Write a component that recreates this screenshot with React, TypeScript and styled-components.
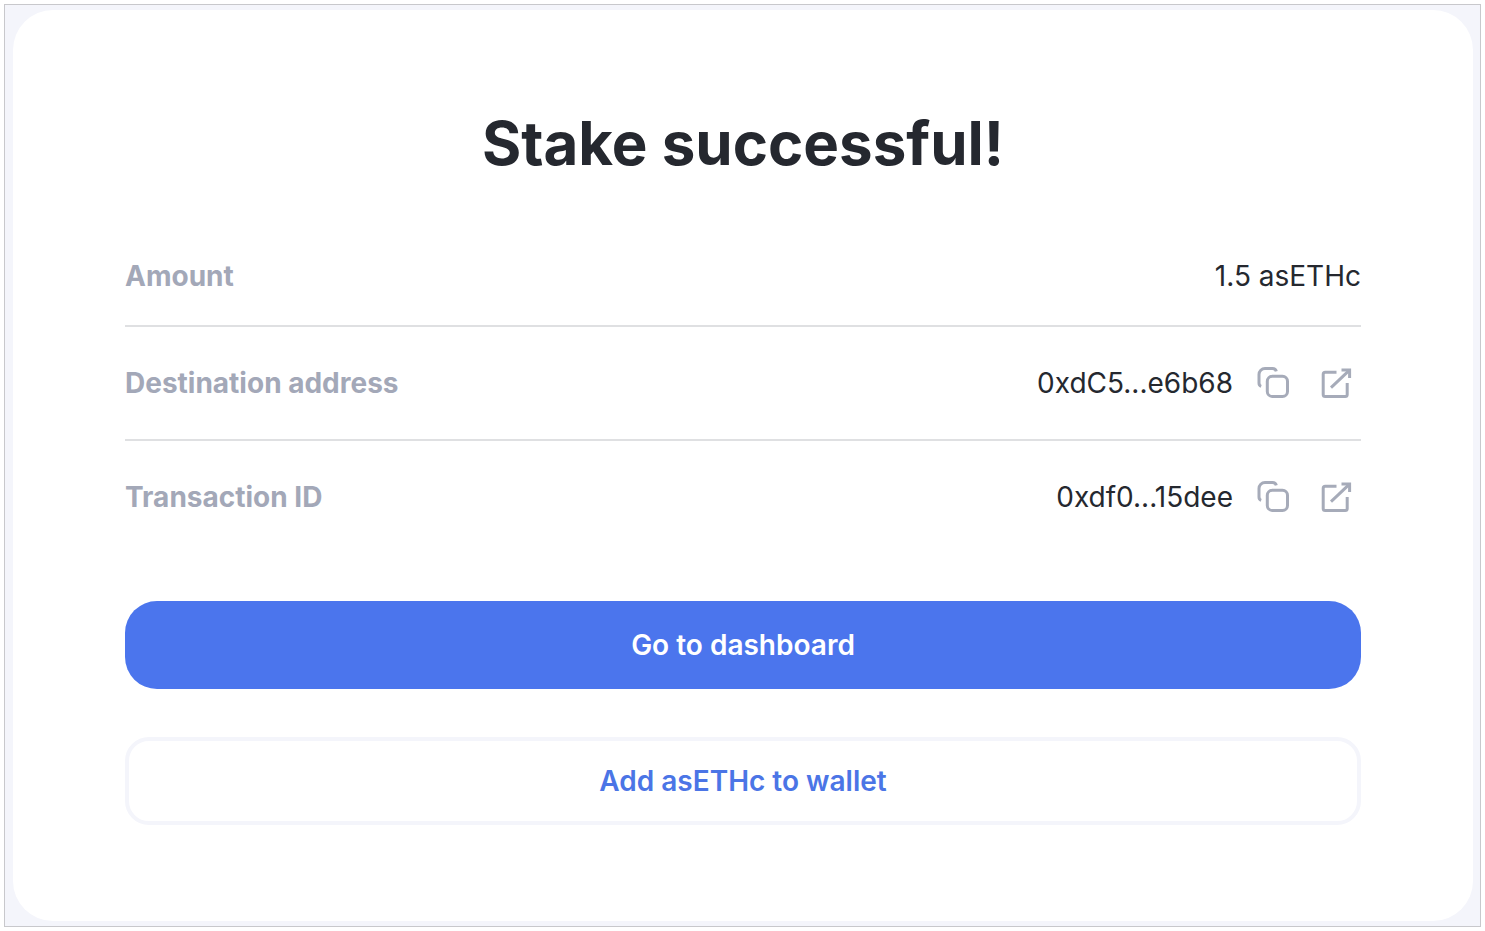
import React from "react";
import styled, { createGlobalStyle } from "styled-components";

const GlobalStyle = createGlobalStyle`
  *, *::before, *::after { box-sizing: border-box; }
  body {
    margin: 0;
    background: #ffffff;
    color: #25282f;
    font-family: Inter, "Liberation Sans", sans-serif;
  }
`;

const Page = styled.div`
  padding: 4px;
`;

const Frame = styled.div`
  padding: 5px 7px 5px 8px;
  border: 1px solid #c8c8cc;
  background: #f4f5fb;
`;

const Card = styled.main`
  padding: 95px 112px 96px;
  border-radius: 40px;
  background: #ffffff;
`;

const Title = styled.h1`
  margin: 0 0 71px;
  font-size: 60px;
  line-height: 76px;
  font-weight: 700;
  text-align: center;
`;

const Details = styled.dl`
  margin: 0 0 48px;
`;

const Row = styled.div`
  display: flex;
  align-items: center;
  justify-content: space-between;
  padding: 32px 0;
  border-bottom: 2px solid #dfe0e2;

  &:first-child {
    padding: 6px 0 31px;
  }

  &:last-child {
    border-bottom: 0;
  }
`;

const Label = styled.dt`
  font-size: 28px;
  line-height: 36px;
  font-weight: 700;
  color: #a3a8b8;
`;

const Value = styled.dd`
  display: flex;
  align-items: center;
  gap: 16px;
  margin: 0;
  font-size: 28px;
  line-height: 36px;
`;

const iconControl = `
  display: flex;
  align-items: center;
  justify-content: center;
  width: 48px;
  height: 48px;
  padding: 0;
  border: 0;
  background: none;
  color: #a6abb9;
  cursor: pointer;
`;

const IconButton = styled.button`
  ${iconControl}
`;

const IconLink = styled.a`
  ${iconControl}
`;

const Actions = styled.div`
  display: grid;
  gap: 48px;
`;

const Action = styled.button<{ $outlined?: boolean }>`
  height: 88px;
  border: ${(p) => (p.$outlined ? "4px solid #f4f5fb" : "0")};
  border-radius: ${(p) => (p.$outlined ? "24px" : "32px")};
  background: ${(p) => (p.$outlined ? "#ffffff" : "#4b75ed")};
  color: ${(p) => (p.$outlined ? "#4b75e6" : "#ffffff")};
  font-family: inherit;
  font-size: 28px;
  line-height: 36px;
  font-weight: 600;
  cursor: pointer;
`;

const CopyIcon = () => (
  <svg width="32" height="32" viewBox="0 1 32 32" fill="none" stroke="currentColor" strokeWidth="3" aria-hidden="true">
    <rect x="10.3" y="10.3" width="20.2" height="20.2" rx="5" />
    <path d="M4.2 20.3C2.7 19.8 2 18.6 2 17V8.5a6 6 0 0 1 6-6h7.5c1.9 0 3.3.8 3.8 2.8" />
  </svg>
);

const ExternalIcon = () => (
  <svg width="32" height="32" viewBox="0 1 32 32" fill="none" stroke="currentColor" strokeWidth="3" aria-hidden="true">
    <path d="M15.5 6.2H4.2a2 2 0 0 0-2 2V28.5a2 2 0 0 0 2 2h20a2 2 0 0 0 2-2V17" />
    <path d="M10 21.6 28 4.6" />
    <path d="M20.5 4.1H28.6V12" />
  </svg>
);

const details = [
  { label: "Amount", value: "1.5 asETHc", linked: false },
  { label: "Destination address", value: "0xdC5...e6b68", linked: true },
  { label: "Transaction ID", value: "0xdf0...15dee", linked: true },
];

export default function App() {
  return (
    <Page>
      <GlobalStyle />
      <Frame>
        <Card>
          <Title>Stake successful!</Title>
          <Details>
            {details.map(({ label, value, linked }) => (
              <Row key={label}>
                <Label>{label}</Label>
                <Value>
                  {value}
                  {linked && (
                    <>
                      <IconButton type="button" aria-label={`Copy ${label}`}>
                        <CopyIcon />
                      </IconButton>
                      <IconLink href="#" aria-label={`Open ${label} in explorer`}>
                        <ExternalIcon />
                      </IconLink>
                    </>
                  )}
                </Value>
              </Row>
            ))}
          </Details>
          <Actions>
            <Action type="button">Go to dashboard</Action>
            <Action type="button" $outlined>
              Add asETHc to wallet
            </Action>
          </Actions>
        </Card>
      </Frame>
    </Page>
  );
}
